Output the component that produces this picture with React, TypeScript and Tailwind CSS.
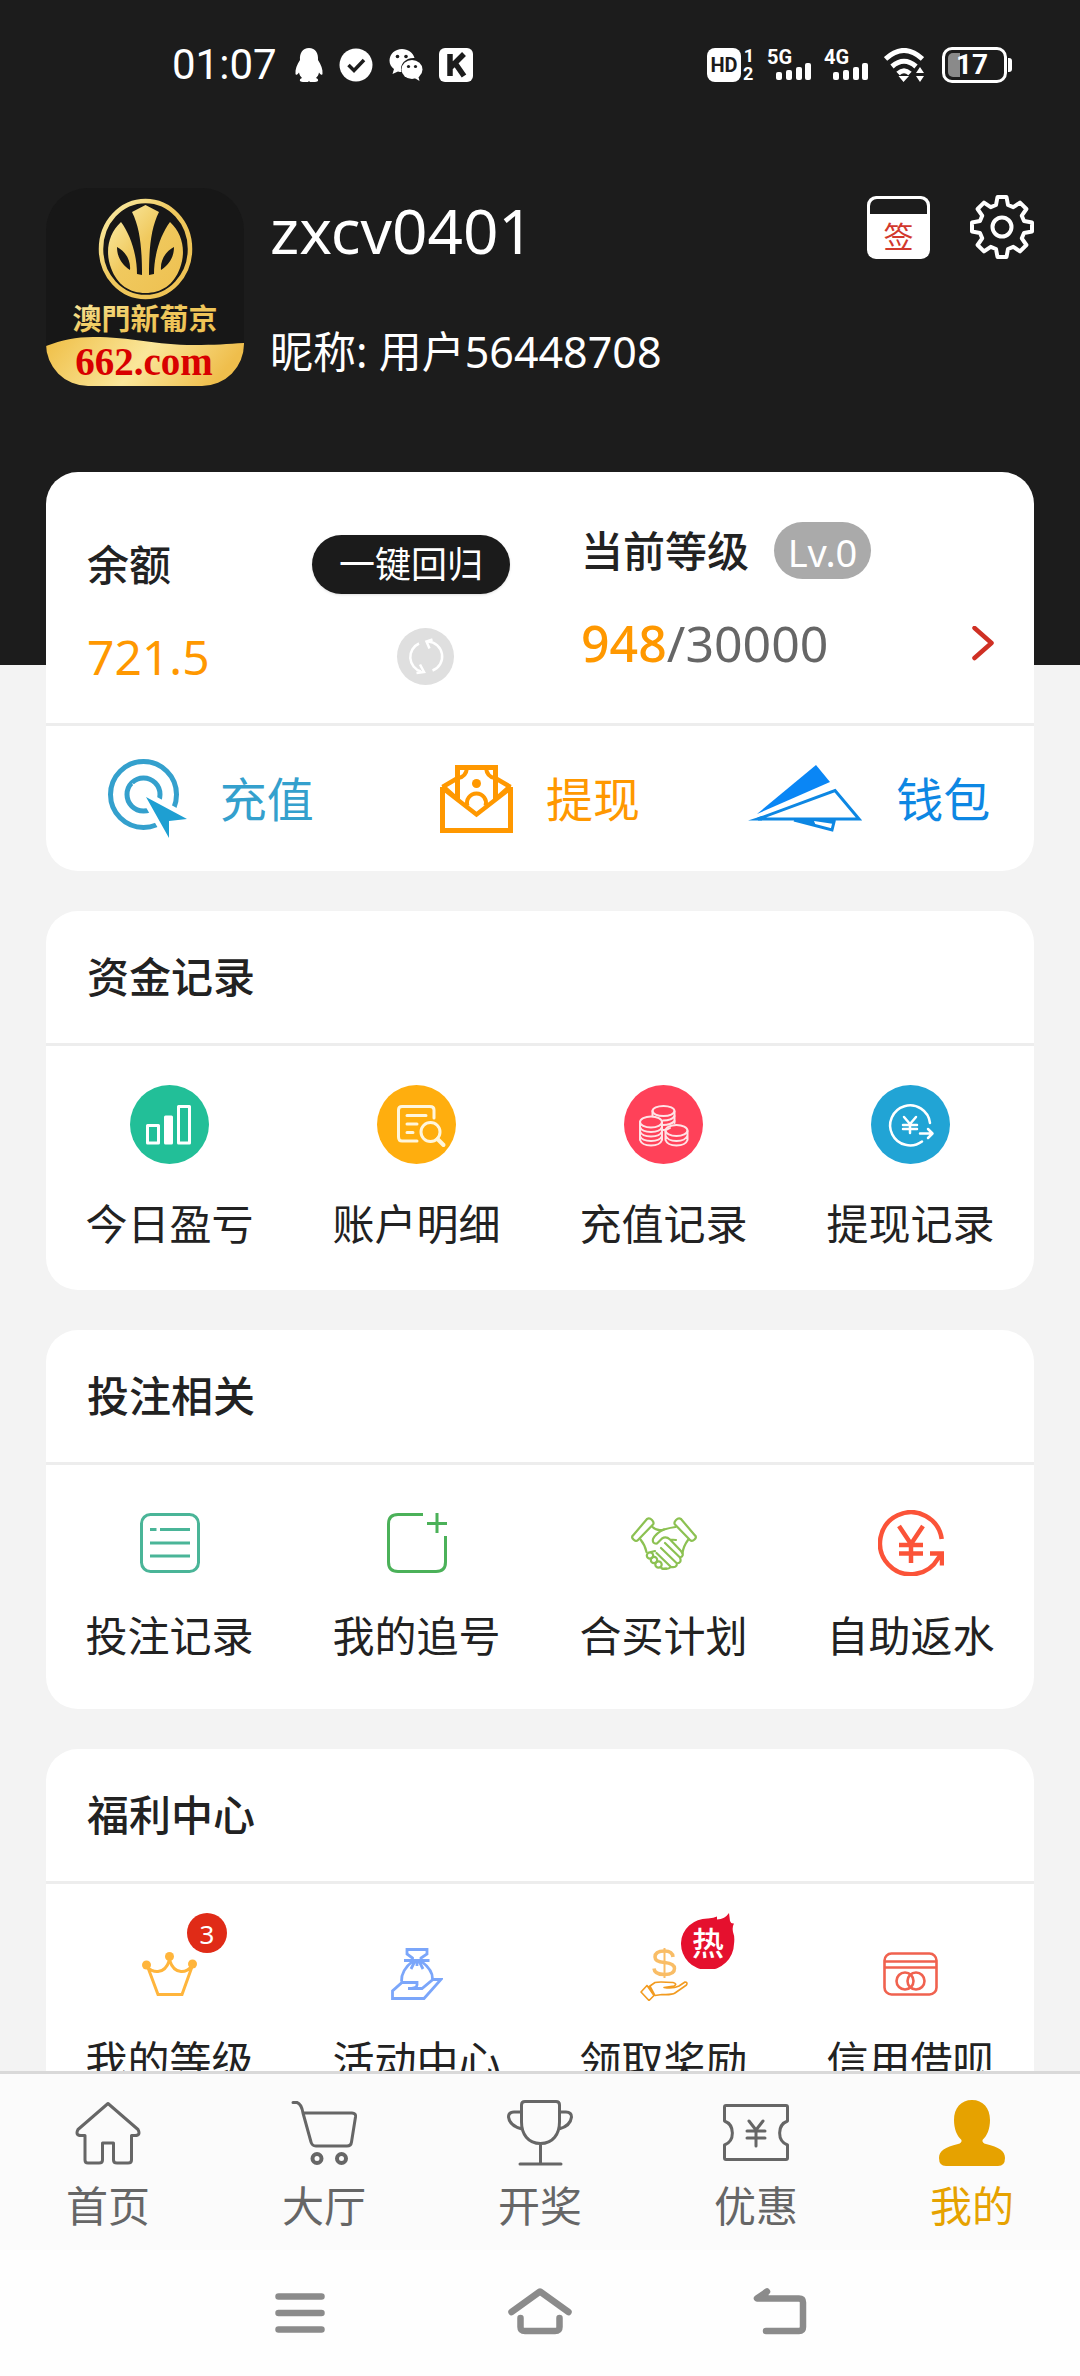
import type { ReactNode } from "react";

const gearPath = (() => {
  const parts: string[] = [];
  const point = (r: number, off: number, a: number) => {
    const x = 32 + r * Math.cos(a) - off * Math.sin(a);
    const y = 32 + r * Math.sin(a) + off * Math.cos(a);
    return `${x.toFixed(1)} ${y.toFixed(1)}`;
  };
  for (let k = 0; k < 8; k++) {
    const a = (k * Math.PI) / 4;
    parts.push(`L${point(22, -6, a)}L${point(30, -4.5, a)}L${point(30, 4.5, a)}L${point(22, 6, a)}`);
  }
  return `M${parts.join("").slice(1)}Z`;
})();

function StatusBar() {
  return (
    <div className="flex h-[130px] items-center justify-between pl-[172px] pr-[68px] text-white">
      <div className="flex items-center gap-[16px]">
        <span className="mr-[2px] text-[42px] leading-[48px] font-['Roboto',sans-serif]">01:07</span>
        <svg width="28" height="34" viewBox="0 0 28 34" fill="currentColor" aria-hidden="true">
          <path d="M14 0C7.500 0 4.500 5 5 12C2 17 0 21 0.500 26C1.500 28 3 26 4 24.500C4.500 27 5.500 28.500 7 30C4 31 4 34 8 34H13L14 33L15 34H20C24 34 24 31 21 30C22.500 28.500 23.500 27 24 24.500C25 26 26.500 28 27.500 26C28 21 26 17 23 12C23.500 5 20.500 0 14 0Z" />
        </svg>
        <svg width="34" height="34" viewBox="0 0 34 34" aria-hidden="true">
          <circle cx="17" cy="17" r="16.500" fill="#fff" />
          <path d="M9.500 17L15 22.500L25 12" fill="none" stroke="#1c1c1c" strokeWidth="3.500" />
        </svg>
        <svg width="34" height="34" viewBox="0 0 34 34" fill="currentColor" aria-hidden="true">
          <path d="M13 1C6 1 0.500 6 0.500 12.500C0.500 16 2 19 5 21L3.500 26L9 23.500Q11 24 12.500 24C10 16 17 9.500 25.500 10C24 4.500 19 1 13 1Z" />
          <ellipse cx="23" cy="21.500" rx="10.500" ry="9.500" />
          <path d="M24 29L30.500 33L29 27Z" />
          <g fill="#1c1c1c">
            <circle cx="8.500" cy="8.500" r="1.800" />
            <circle cx="17" cy="8.500" r="1.800" />
            <circle cx="19.500" cy="18.500" r="1.600" />
            <circle cx="26.500" cy="18.500" r="1.600" />
          </g>
        </svg>
        <svg width="34" height="34" viewBox="0 0 34 34" aria-hidden="true">
          <rect width="34" height="34" rx="6" fill="#fff" />
          <path d="M11 6V28M25 6L12 19M16 15L25 28" fill="none" stroke="#1c1c1c" strokeWidth="5.500" />
        </svg>
      </div>
      <div className="flex items-center">
        <span className="flex h-[34px] w-[34px] items-center justify-center rounded-[8px] bg-white font-['Roboto',sans-serif] text-[20px] font-bold text-[#1c1c1c]">HD</span>
        <span className="ml-[2px] flex w-[12px] flex-col font-['Roboto',sans-serif] text-[18px] font-bold leading-[18px]">
          <span className="text-center">1</span>
          <span>2</span>
        </span>
        <Signal label="5G" />
        <Signal label="4G" />
        <svg className="ml-[15px]" width="40" height="34" viewBox="0 0 40 34" fill="none" stroke="#fff" strokeWidth="5" aria-hidden="true">
          <path d="M1.500 11Q20 -6 38.500 11M8 18.500Q20 8 32 18.500M14 25.500Q20 20 26 25.500" />
          <path d="M14.500 28H25L19.500 34ZM32 25H40L36 19ZM32 28H40L36 34Z" fill="#fff" stroke="none" />
        </svg>
        <div className="ml-[18px] flex h-[36px] w-[65px] items-center rounded-[10px] border-[3px] border-white p-[3px]">
          <span className="h-full w-[12px] rounded-l-[5px] bg-[#8a8a8a]" />
          <span className="-ml-[4px] font-['Roboto',sans-serif] text-[28px] font-bold leading-[28px]">17</span>
        </div>
        <span className="ml-[1px] h-[14px] w-[4px] rounded-r-[3px] bg-white" />
      </div>
    </div>
  );
}

function Signal({ label }: { label: string }) {
  return (
    <span className="relative ml-[12px] flex h-[34px] w-[45px] items-end justify-end pb-[2px]">
      <span className="absolute -top-[2px] left-0 font-['Roboto',sans-serif] text-[20px] font-bold leading-[22px]">{label}</span>
      <svg width="36" height="17" viewBox="0 0 36 17" fill="#fff" aria-hidden="true">
        <rect x="0" y="9" width="6" height="8" rx="2" />
        <rect x="10" y="7" width="6" height="10" rx="2" />
        <rect x="20" y="4" width="6" height="13" rx="2" />
        <rect x="29" y="0" width="6" height="17" rx="2" />
      </svg>
    </span>
  );
}

function Avatar() {
  return (
    <svg className="shrink-0" width="198" height="198" viewBox="0 0 198 198" role="img" aria-label="澳門新葡京 662.com">
      <defs>
        <linearGradient id="gold" x1="0" y1="0" x2="1" y2="1">
          <stop offset="0" stopColor="#fbf0ae" />
          <stop offset="0.450" stopColor="#f0c95e" />
          <stop offset="1" stopColor="#eec050" />
        </linearGradient>
        <linearGradient id="band" x1="0" y1="0" x2="1" y2="0.200">
          <stop offset="0" stopColor="#efbe45" />
          <stop offset="0.550" stopColor="#fae69a" />
          <stop offset="1" stopColor="#efbe4c" />
        </linearGradient>
        <clipPath id="avatarClip">
          <rect width="198" height="198" rx="42" />
        </clipPath>
      </defs>
      <g clipPath="url(#avatarClip)">
        <rect width="198" height="198" fill="#171717" />
        <ellipse cx="99.500" cy="61" rx="44.500" ry="48" fill="none" stroke="url(#gold)" strokeWidth="4.500" />
        <path d="M75 34C84 46 91 66 91 86L96 87C96 60 94 40 86 24L99.500 17L113 24C105 40 103 60 103 87L108 86C108 66 115 46 124 34C137 46 140 64 134 80C128 97 115 105 99.500 105C84 105 71 97 65 80C59 64 62 46 75 34Z" fill="url(#gold)" />
        <path d="M71 59C79 63 85 72 84 82C76 77 71 69 71 59ZM128 59C120 63 114 72 115 82C123 77 128 69 128 59Z" fill="#171717" />
        <text x="99" y="142" textAnchor="middle" fontSize="29" fontWeight="700" fill="url(#gold)" className="font-['Noto_Sans_CJK_TC',sans-serif]">澳門新葡京</text>
        <path d="M0 158C16 152 30 149 47 149C85 149 110 157 148 157C168 157 182 156 198 155V198H0Z" fill="url(#band)" />
        <text x="98" y="187" textAnchor="middle" fontSize="39" fontWeight="700" fill="#d80000" className="font-['Liberation_Serif',serif]">662.com</text>
      </g>
    </svg>
  );
}

function Profile() {
  return (
    <div className="flex pl-[46px] pr-[46px] pt-[58px] text-white">
      <Avatar />
      <div className="ml-[26px] flex flex-1 flex-col">
        <h1 className="mt-[6px] text-[62px] leading-[72px]">zxcv0401</h1>
        <p className="mt-[58px] text-[43px] leading-[56px]">昵称: 用户56448708</p>
      </div>
      <div className="mt-[6px] flex h-[66px] items-center gap-[40px]">
        <button type="button" aria-label="签到" className="flex h-[63px] w-[63px] flex-col items-center rounded-[9px] bg-white p-[3px]">
          <span className="h-[15px] w-full shrink-0 rounded-t-[7px] bg-[#1c1c1c]" />
          <span className="mt-[5px] text-[30px] leading-[36px] text-[#d2382c]">签</span>
        </button>
        <button type="button" aria-label="设置">
          <svg width="64" height="64" viewBox="0 0 64 64" fill="none" stroke="#fff" strokeWidth="4" strokeLinejoin="round">
            <path d={gearPath} />
            <circle cx="32" cy="32" r="9.500" />
          </svg>
        </button>
      </div>
    </div>
  );
}

function AccountCard() {
  return (
    <section className="relative -mt-[193px] rounded-[32px] bg-white">
      <div className="grid h-[251px] grid-cols-2">
        <div className="flex flex-col gap-[34px] pl-[41px] pr-[30px] pt-[63px]">
          <div className="flex items-center justify-between">
            <span className="text-[42px] font-medium leading-[59px]">余额</span>
            <button type="button" className="h-[59px] w-[198px] rounded-full bg-[#1b1b1b] text-[36px] leading-[58px] text-white shadow-sm">一键回归</button>
          </div>
          <div className="flex items-center justify-between pr-[56px]">
            <span className="text-[48px] leading-[57px] text-[#ff9800]">721.5</span>
            <button type="button" aria-label="刷新" className="h-[57px] w-[57px] rounded-full bg-[#dfdfdf]">
              <svg width="57" height="57" viewBox="0 0 57 57" fill="none" stroke="#fff" strokeWidth="2.500">
                <path d="M22 15.500A15 15 0 0 0 24 43.500M35.500 42.500A15 15 0 0 0 31 13.500" />
                <path d="M23 36.500L27 44L19.500 45M35.500 11.500L29.500 13.500L32.500 20.500" />
              </svg>
            </button>
          </div>
        </div>
        <div className="flex flex-col gap-[36px] pl-[41px] pr-[40px] pt-[50px]">
          <div className="flex items-center">
            <span className="text-[42px] font-medium leading-[57px]">当前等级</span>
            <span className="ml-[25px] h-[57px] w-[97px] rounded-full bg-[#aaa] text-center text-[38px] leading-[60px] text-white">Lv.0</span>
          </div>
          <a href="#level" className="flex items-center justify-between">
            <span className="text-[50px] leading-[57px] text-[#666]">
              <span className="font-medium text-[#ff9800]">948</span>/30000
            </span>
            <svg width="22" height="36" viewBox="0 0 22 36" fill="none" stroke="#cf3024" strokeWidth="4.500" strokeLinecap="round" strokeLinejoin="round" aria-hidden="true">
              <path d="M2.500 2L19.500 17L2.500 32" />
            </svg>
          </a>
        </div>
      </div>
      <div className="grid h-[148px] grid-cols-3 border-t-[3px] border-[#ededed] text-[47px] leading-[60px]">
        <a href="#recharge" className="flex items-center justify-center gap-[33px] text-[#34a0cd]">
          <svg width="79" height="79" viewBox="0 0 79 79" fill="none" stroke="currentColor" strokeWidth="5" aria-hidden="true">
            <circle cx="35.500" cy="35.500" r="33" />
            <circle cx="35.500" cy="35.500" r="16.500" />
            <path d="M36 36L79 60L63 64L61 79Z" stroke="#fff" strokeWidth="9" />
            <path d="M38 38L79 60L61 62L61 79Z" fill="#1e9fd2" stroke="none" />
          </svg>
          <span>充值</span>
        </a>
        <a href="#withdraw" className="flex items-center justify-center gap-[33px] text-[#ff9800]">
          <svg width="73" height="68" viewBox="0 0 73 68" fill="none" stroke="currentColor" strokeWidth="5" aria-hidden="true">
            <path d="M2.500 22V65.500H70.500V22" />
            <path d="M2.500 23L36.500 49.500L70.500 23M2.500 22L17 13.500M70.500 22L56 13.500M2.500 21L17 34M70.500 21L56 34" strokeWidth="4.500" />
            <path d="M17.500 34V2.500H55.500V34" />
            <path d="M27 3Q26 12 18 13M46 3Q47 12 55 13M27.500 41A9.500 9.500 0 1 1 45.500 41" strokeWidth="4" />
            <circle cx="36.500" cy="18.500" r="4.500" fill="currentColor" stroke="none" />
          </svg>
          <span>提现</span>
        </a>
        <a href="#wallet" className="flex items-center justify-center gap-[33px] text-[#0d87e3]">
          <svg width="115" height="67" viewBox="0 0 115 67" fill="none" stroke="currentColor" strokeWidth="3" aria-hidden="true">
            <path d="M68 0L82 17L9 49Z" fill="#0a86f5" stroke="none" />
            <path d="M87 25.500L111 54H10Z" />
            <path d="M46 55L84 65L86.500 55" />
            <path d="M0 55.500L14 51V55.500ZM44 54L68 61L66 56L86 59V54Z" fill="currentColor" stroke="none" />
          </svg>
          <span>钱包</span>
        </a>
      </div>
    </section>
  );
}

function Yen({ x, y, w, h, bar1, bar2, arm }: { x: number; y: number; w: number; h: number; bar1: number; bar2: number; arm: number }) {
  return <path d={`M${x - w} ${y}L${x} ${bar1 - 1}L${x + w} ${y}M${x} ${bar1 - 1}V${y + h}M${x - arm} ${bar1}H${x + arm}M${x - arm} ${bar2}H${x + arm}`} />;
}

function Disc({ color, children }: { color: string; children: ReactNode }) {
  return (
    <svg width="79" height="79" viewBox="0 0 79 79" fill="none" stroke="#fff" strokeWidth="3" strokeLinecap="round" strokeLinejoin="round" aria-hidden="true">
      <circle cx="39.500" cy="39.500" r="39.500" fill={color} stroke="none" />
      {children}
    </svg>
  );
}

const fundItems = [
  {
    label: "今日盈亏",
    icon: (
      <Disc color="#22bf98">
        <rect x="17.500" y="40.500" width="11" height="17.500" />
        <rect x="35.500" y="32" width="6" height="26" fill="#fff" />
        <rect x="48.500" y="21.500" width="11" height="36.500" />
      </Disc>
    ),
  },
  {
    label: "账户明细",
    icon: (
      <Disc color="#ffae0e">
        <g stroke="#fff6dc">
          <path d="M57 33V25Q57 21.500 53 21.500H25Q21.500 21.500 21.500 25V52Q21.500 56 25 56H40M30 30.500H49M30 39H40M30 47.500H36" />
          <circle cx="53.500" cy="47" r="9.500" />
          <path d="M60.500 54L66.500 60" strokeWidth="4" />
        </g>
      </Disc>
    ),
  },
  {
    label: "充值记录",
    icon: (
      <Disc color="#ff4159">
        <g stroke="#ffe3e6" strokeWidth="2">
          <path d="M50.500 26.500V38M28.500 26V31" />
          <ellipse cx="39.500" cy="26" rx="11" ry="5" />
          <path d="M39 35.500Q48 35.500 50.500 31M39 40Q47 40 50.500 36M39 45Q43 45 46 43" />
          <ellipse cx="27" cy="37" rx="11" ry="5.500" />
          <path d="M16 37V55Q18 60.500 27 60.500T38 55V37M16 42Q18 47 27 47T38 42M16 46.500Q18 51.500 27 51.500T38 46.500M16 51Q18 56 27 56T38 51" />
          <ellipse cx="52.500" cy="45.500" rx="11" ry="5.500" />
          <path d="M41.500 46V55Q43.500 60.500 52.500 60.500T63.500 55V46M41.500 50.500Q43.500 56 52.500 56T63.500 50.500" />
        </g>
      </Disc>
    ),
  },
  {
    label: "提现记录",
    icon: (
      <Disc color="#21a4d5">
        <path d="M59 38A20 20 0 1 0 51 56.500M49 48.500H61M57 44L61.500 48.500L57 53" strokeWidth="2.500" />
        <g strokeWidth="2.500">
          <Yen x={39} y={32} w={6} h={16} bar1={40} bar2={44} arm={7} />
        </g>
      </Disc>
    ),
  },
];

const betItems = [
  {
    label: "投注记录",
    icon: (
      <svg width="60" height="60" viewBox="0 0 60 60" fill="none" stroke="#4ab598" strokeWidth="3" aria-hidden="true">
        <rect x="1.500" y="1.500" width="57" height="57" rx="9" />
        <path d="M10 16.500H16.500M20 16.500H50M10 30H50M10 43H50" />
      </svg>
    ),
  },
  {
    label: "我的追号",
    icon: (
      <svg width="60" height="60" viewBox="0 0 60 60" fill="none" stroke="#4bb159" strokeWidth="3" aria-hidden="true">
        <path d="M36 1.500H11Q1.500 1.500 1.500 11V49Q1.500 58.500 11 58.500H49Q58.500 58.500 58.500 49V23M40 10.500H60M50 0V20" />
      </svg>
    ),
  },
  {
    label: "合买计划",
    icon: (
      <svg width="66" height="53" viewBox="0 0 66 53" fill="none" stroke="#8cc152" strokeWidth="2.200" strokeLinecap="round" strokeLinejoin="round" aria-hidden="true">
        <path d="M16 2Q18.500 0.500 21 3T22 7.500L7 23Q5 25 2.500 22.500T2 18.500ZM50 2Q47.500 0.500 45 3T44 7.500L59 23Q61 25 63.500 22.500T64 18.500Z" />
        <path d="M21.500 10Q26 14.500 33 12.500T44.500 10M9.500 22.500Q14 28 15.500 35M57 23Q52.500 29 51.500 36" />
        <path d="M33 12.500Q25 16 22 22Q21 27 26 26.500L31 21.500Q35 19 39 22.500L45 23M39 22.500L50 34Q54 39 49 40.500L34 26M49 40.500Q51 46 46 46.500L30 31M46 46.500Q46 51 40 50L25.500 36M40 50Q37 52.500 33 51.500" />
        <circle cx="19" cy="38.500" r="3.200" />
        <circle cx="23" cy="43" r="3.200" />
        <circle cx="27.500" cy="47.500" r="3.200" />
        <path d="M20 35L24 34M30 50.500Q32 53 35 51.500" />
      </svg>
    ),
  },
  {
    label: "自助返水",
    icon: (
      <svg width="66" height="66" viewBox="0 0 66 66" fill="none" stroke="#fb5338" strokeWidth="4.500" aria-hidden="true">
        <path d="M63.700 29A31 31 0 1 0 60 48.500L64 44M52 43.500H64V55.500" />
        <Yen x={33} y={16} w={12} h={37} bar1={35} bar2={43.500} arm={12} />
      </svg>
    ),
  },
];

const welfareItems = [
  {
    label: "我的等级",
    icon: (
      <>
        <svg width="55" height="44" viewBox="0 0 55 44" fill="none" stroke="#ffb53c" strokeWidth="3" aria-hidden="true">
          <path d="M5 13L16 42.500H40L51 12M5 15Q10 20 16 19.500Q24 19 27.500 8Q31 19 39 19.500Q45 20 50 14" />
          <g fill="#ffb53c" stroke="none">
            <circle cx="4.500" cy="13" r="4.500" />
            <circle cx="27.500" cy="4.500" r="4.500" />
            <circle cx="50.500" cy="12" r="4.500" />
          </g>
        </svg>
        <span className="absolute -top-[28px] left-[57px] h-[40px] w-[40px] rounded-full bg-[#e02b17] text-center text-[26px] leading-[42px] text-white">3</span>
      </>
    ),
  },
  {
    label: "活动中心",
    icon: (
      <svg width="52" height="52" viewBox="0 0 52 52" fill="none" stroke="#7ba6fa" strokeWidth="2.800" aria-hidden="true">
        <path d="M16 1.500H36V6L30 10V12.500H21.500V10L16 6ZM13 12.500H38.500M22 13Q10 22 10.500 33.500M30 13Q42 22 41.500 31M24 13L20 21M28 13L32 21M26 14V18" />
        <path d="M1.500 50.500V43L11 34.500H26V37Q26 40.500 17 40.500H31L42 31.500H50L33 50.500Z" />
      </svg>
    ),
  },
  {
    label: "领取奖励",
    icon: (
      <>
        <svg width="48" height="53" viewBox="0 0 48 53" fill="none" stroke="#f29b20" strokeWidth="1.600" strokeLinejoin="round" aria-hidden="true">
          <path d="M33 9Q32.500 3 24.500 3Q15 3 15 9Q15 14 24.500 14.500Q34.500 15.500 34.500 20.500Q34.500 26.500 24.500 26.500Q14.500 26.500 14 20.500" stroke="#f9bd66" strokeWidth="3.500" />
          <path d="M24.500 0V30" stroke="#f9bd66" strokeWidth="2" />
          <path d="M10 38L15 34.500Q18 33.500 33 34.500Q38 36 34 38L24 39.500Q33 41 39 38L45 34Q48 34 46.500 37L35 45Q32 47 22 46.500L15 47.500ZM7 37.500L1 44L9 52.500L14 47.500ZM8.500 38L14.500 46.500" />
        </svg>
        <svg className="absolute -top-[28px] left-[57px]" width="54" height="56" viewBox="0 0 54 56" aria-hidden="true">
          <path d="M27 5.500Q33 5 36 3.500V6.500Q44 6 48 0L49 8Q50 11 53 10.500Q51 14 52 19Q54 24 53 31A26.500 26.500 0 0 1 0 30A26.500 25 0 0 1 27 5.500Z" fill="#e5102e" />
          <text x="27" y="42" textAnchor="middle" fontSize="32" fontWeight="500" fill="#fff">热</text>
        </svg>
      </>
    ),
  },
  {
    label: "信用借呗",
    icon: (
      <svg width="55" height="44" viewBox="0 0 55 44" fill="none" stroke="#f0624f" strokeWidth="2.600" aria-hidden="true">
        <rect x="1.500" y="1.500" width="52" height="41" rx="7" />
        <path d="M1.500 9.500H53.500M1.500 15.500H53.500" />
        <circle cx="22" cy="29" r="8.500" />
        <circle cx="33" cy="29" r="8.500" />
      </svg>
    ),
  },
];

type Item = { label: string; icon: ReactNode };

function Section({ title, items, bodyClass, slotClass }: { title: string; items: Item[]; bodyClass: string; slotClass: string }) {
  return (
    <section className="shrink-0 rounded-[32px] bg-white">
      <h2 className="px-[41px] py-[36px] text-[42px] font-medium leading-[60px]">{title}</h2>
      <div className={`grid grid-cols-4 border-t-[3px] border-[#ededed] ${bodyClass}`}>
        {items.map((item) => (
          <a key={item.label} href={`#${item.label}`} className="flex flex-col items-center">
            <span className={`relative flex w-[79px] items-center justify-center ${slotClass}`}>{item.icon}</span>
            <span className="text-[42px] leading-[48px]">{item.label}</span>
          </a>
        ))}
      </div>
    </section>
  );
}

const tabs = [
  {
    label: "首页",
    icon: <path d="M33 3.500L3 29.500Q0 35.500 6 35.500H10V60Q10 63 13 63H24Q27.500 63 27.500 60V43H38.500V60Q38.500 63 42 63H53Q56.500 63 56.500 60V35.500H60Q66 35.500 63 29.500Z" />,
  },
  {
    label: "大厅",
    icon: (
      <>
        <path d="M2 2.500H6Q10.500 4 12 13L20 42Q21 46 25 46H56Q60 46 60.500 42L64.500 17Q65 13 61 13H13" />
        <circle cx="26" cy="58.500" r="4.500" strokeWidth="4" />
        <circle cx="50.500" cy="58.500" r="4.500" strokeWidth="4" />
      </>
    ),
  },
  {
    label: "开奖",
    icon: <path d="M18 1.500H49Q52.500 1.500 52.500 5V22C52.500 34 46 43.500 33.500 43.500S14.500 34 14.500 22V5Q14.500 1.500 18 1.500ZM14.500 12H7Q1.500 12 1.500 17Q2.500 26 15 29M52.500 12H59Q64.500 12 64.500 17Q63.500 26 52 29M33.500 44V63M13 64H54" />,
  },
  {
    label: "优惠",
    icon: (
      <>
        <path d="M3 5.500H63Q64.500 5.500 64.500 7V21C54 25 54 41 64.500 45V58Q64.500 59.500 63 59.500H3Q1.500 59.500 1.500 58V45C12 41 12 25 1.500 21V7Q1.500 5.500 3 5.500Z" />
        <Yen x={33} y={21} w={7} h={25} bar1={31} bar2={38} arm={9} />
      </>
    ),
  },
  {
    label: "我的",
    icon: <path d="M33 0C22 0 15 8 15 20C15 29 18 36 22.500 40Q23 43 19 44C6 47 0 51 0 58Q0 66 7 66H59Q66 66 66 58C66 51 60 47 47 44Q43 43 43.500 40C48 36 51 29 51 20C51 8 44 0 33 0Z" fill="currentColor" stroke="none" />,
    active: true,
  },
];

export default function App() {
  return (
    <div className="flex h-screen flex-col overflow-hidden bg-[#f3f3f3] text-[#222] font-['Noto_Sans','Noto_Sans_CJK_SC',sans-serif]">
      <main className="min-h-0 flex-1 overflow-hidden">
        <header className="bg-[#1c1c1c] pb-[279px]">
          <StatusBar />
          <Profile />
        </header>
        <div className="flex flex-col gap-[40px] px-[46px]">
          <AccountCard />
          <Section title="资金记录" items={fundItems} bodyClass="pt-[39px] pb-[42px]" slotClass="h-[79px] mb-[36px]" />
          <Section title="投注相关" items={betItems} bodyClass="pt-[45px] pb-[49px]" slotClass="h-[66px] mb-[36px]" />
          <Section title="福利中心" items={welfareItems} bodyClass="pt-[57px] pb-[42px]" slotClass="h-[66px] mb-[30px]" />
        </div>
      </main>
      <nav className="grid shrink-0 grid-cols-5 border-t-[3px] border-[#d9d9d9] bg-[#fbfbfb] pb-[20px] pt-[26px]">
        {tabs.map((tab) => (
          <a key={tab.label} href={`#${tab.label}`} aria-current={tab.active ? "page" : undefined} className={`flex flex-col items-center gap-[16px] ${tab.active ? "text-[#e6a200]" : "text-[#666]"}`}>
            <svg width="66" height="66" viewBox="0 0 66 66" fill="none" stroke="currentColor" strokeWidth="3" strokeLinecap="round" strokeLinejoin="round" aria-hidden="true">
              {tab.icon}
            </svg>
            <span className="text-[42px] leading-[48px]">{tab.label}</span>
          </a>
        ))}
      </nav>
      <div className="shrink-0 bg-[#fefefe]">
        <div className="mx-auto grid h-[126px] w-2/3 grid-cols-3 place-items-center text-[#8b8b8b]">
          <button type="button" aria-label="菜单">
            <svg width="50" height="42" viewBox="0 0 50 42" fill="none" stroke="currentColor" strokeWidth="6.500" strokeLinecap="round">
              <path d="M3.500 4.500H46.500M3.500 21H46.500M3.500 37.500H46.500" />
            </svg>
          </button>
          <button type="button" aria-label="主页">
            <svg width="64" height="50" viewBox="0 0 64 50" fill="none" stroke="currentColor" strokeWidth="6.500" strokeLinecap="round" strokeLinejoin="round">
              <path d="M3.500 24L32 3.500L60.500 24" />
              <path d="M12.500 30V39Q12.500 43 17 43H47Q51.500 43 51.500 39V30" />
            </svg>
          </button>
          <button type="button" aria-label="返回">
            <svg width="54" height="50" viewBox="0 0 54 50" fill="none" stroke="currentColor" strokeWidth="6.500" strokeLinecap="round" strokeLinejoin="round">
              <path d="M14 3.500L4 10.500H46Q50 10.500 50 14.500V39Q50 43 46 43H13" />
              <path d="M14 3.500V10H4Z" fill="currentColor" strokeWidth="3" />
            </svg>
          </button>
        </div>
      </div>
    </div>
  );
}
